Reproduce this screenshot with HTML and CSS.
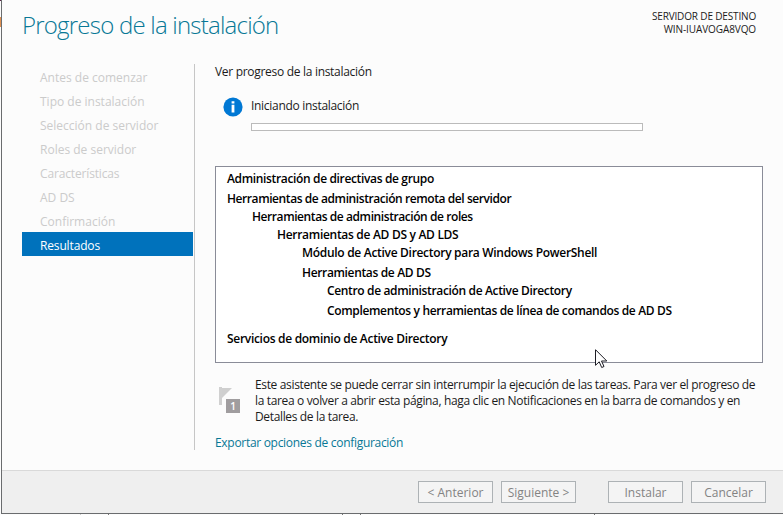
FILE: index.html
```html
<!DOCTYPE html>
<html lang="es">
<head>
<meta charset="utf-8">
<title>Progreso de la instalación</title>
<link rel="stylesheet" href="styles.css">
</head>
<body>
<div class="backdrop-left"><i class="mark-purple"></i><i class="mark-orange"></i></div>
<main class="wizard">
  <header class="header">
    <h1>Progreso de la instalación</h1>
    <div class="server"><div>SERVIDOR DE DESTINO</div><div class="server-name">WIN-IUAVOGA8VQO</div></div>
  </header>
  <div class="body">
    <nav class="steps">
      <span>Antes de comenzar</span>
      <span>Tipo de instalación</span>
      <span>Selección de servidor</span>
      <span>Roles de servidor</span>
      <span class="snug">Características</span>
      <span>AD DS</span>
      <span>Confirmación</span>
      <span class="active snug">Resultados</span>
    </nav>
    <section class="content">
      <div class="caption">Ver progreso de la instalación</div>
      <div class="status">
        <svg class="info" width="20" height="20" viewBox="0 0 20 20"><circle cx="10" cy="10" r="9.6" fill="#0078d4"/><path d="M8.600 4.300h2.800v2.200H8.600zM8.600 7.700h2.800v7.800H8.600z" fill="#fff"/></svg>
        <div class="status-main"><div class="status-text">Iniciando instalación</div><div class="bar"></div></div>
      </div>
      <ul class="features">
        <li class="tall">Administración de directivas de grupo</li>
        <li class="tight">Herramientas de administración remota del servidor</li>
        <li class="l1 tight">Herramientas de administración de roles</li>
        <li class="l2 loose">Herramientas de AD DS y AD LDS</li>
        <li class="l3 tall loose">Módulo de Active Directory para Windows PowerShell</li>
        <li class="l3">Herramientas de AD DS</li>
        <li class="l4 tall">Centro de administración de Active Directory</li>
        <li class="l4 last">Complementos y herramientas de línea de comandos de AD DS</li>
        <li class="loose">Servicios de dominio de Active Directory</li>
      </ul>
      <div class="note">
        <svg class="flag" width="24" height="28" viewBox="0 0 24 28"><path d="M0 0h3v18H0z" fill="#d0d0d0"/><path d="M3 1h10L3 11z" fill="#cfcfcf"/><path d="M7 12h14v14H7z" fill="#a09d9f"/><text x="14" y="23" text-anchor="middle">1</text></svg>
        <p>Este asistente se puede cerrar sin interrumpir la ejecución de las tareas. Para ver el progreso de<br>la tarea o volver a abrir esta página, haga clic en Notificaciones en la barra de comandos y en<br>Detalles de la tarea.</p>
      </div>
      <a class="export">Exportar opciones de configuración</a>
    </section>
  </div>
  <footer class="footer">
    <button>&lt; Anterior</button><button>Siguiente &gt;</button><button class="install">Instalar</button><button>Cancelar</button>
  </footer>
</main>
<div class="backdrop-bottom"><i></i><i></i><i></i><i></i><i></i></div>
<svg class="cursor" width="13" height="20" viewBox="0 0 13 20"><path d="M.5.7v15.600l3.700-3.500 2.500 5.700 2.300-1-2.500-5.500h5.300z" fill="#fff" stroke="#1c1c24"/></svg>
</body>
</html>
```
FILE: styles.css
```css
* { box-sizing: border-box; }
body {
  margin: 0;
  width: 783px;
  height: 515px;
  overflow: hidden;
  display: grid;
  grid-template: 514px 1px / 1px 782px;
  background: #fcfcfc;
  color: #1b1b1b;
  font: 12px/16px "Open Sans", "Noto Sans", sans-serif;
  white-space: nowrap;
}
.backdrop-left { display: flex; flex-direction: column; }
.mark-purple { height: 1px; background: #5b2348; }
.mark-orange { height: 10px; margin-top: 16px; background: #e09152; }
.wizard {
  display: flex;
  flex-direction: column;
  border-left: 1px solid #6a6c6e;
  border-bottom: 1px solid #6a6c6e;
}
.header {
  height: 64px;
  display: flex;
  justify-content: space-between;
  padding: 8px 27px 0 20px;
}
h1 {
  margin: 0;
  font-size: 24px;
  line-height: 34px;
  font-weight: 300;
  color: #087896;
  letter-spacing: -0.78px;
}
.server { text-align: right; font-size: 10px; line-height: 13px; padding-top: 2px; letter-spacing: -0.16px; }
.server-name { letter-spacing: -0.1px; }
.body { display: flex; height: 406px; }
.steps {
  width: 193px;
  height: 386px;
  padding: 0 1px 0 20px;
  border-right: 1px solid #c6c6c6;
  display: flex;
  flex-direction: column;
}
.steps span {
  height: 24px;
  line-height: 28px;
  padding-left: 18px;
  color: #cbcbcb;
}
.steps .snug { letter-spacing: -0.15px; }
.steps .active { background: #0072bc; color: #fff; }
.content { width: 568px; padding-left: 20px; letter-spacing: -0.3px; }
.caption { line-height: 16px; height: 16px; }
.status { display: flex; height: 86px; padding: 17px 0 0 8px; }
.status-text { height: 16px; line-height: 18px; }
.info { margin-right: 8px; }
.bar { width: 392px; height: 8px; margin-top: 10px; border: 1px solid #bbb; background: #fff; }
.features {
  list-style: none;
  margin: 0;
  height: 197px;
  padding: 3px 0 0 11px;
  border: 1px solid #8a8c98;
  background: #fff;
  color: #000;
  font-weight: 600;
  letter-spacing: -0.35px;
}
.features li { height: 18px; line-height: 18px; }
.features .tall { height: 20px; }
.features .tight { letter-spacing: -0.42px; }
.features .loose { letter-spacing: -0.3px; }
.l1 { padding-left: 25px; }
.l2 { padding-left: 50px; }
.l3 { padding-left: 75px; }
.l4 { padding-left: 100px; }
.features .last { height: 28px; }
.note { display: flex; height: 72px; padding: 14px 0 0 4px; }
.note p { margin: 0; letter-spacing: -0.35px; }
.flag { flex: none; margin: 10px 12px 0 0; }
.flag text { fill: #fff; font-size: 10px; font-weight: 600; letter-spacing: 0; }
.export { color: #087896; display: block; }
.footer {
  height: 43px;
  padding: 10px 0 0 416px;
  display: flex;
  gap: 8px;
  border-top: 1px solid #d9d9d9;
  background: #efefef;
}
button {
  width: 75px;
  height: 22px;
  padding: 1px 0 0;
  border: 1px solid #adb2b5;
  background: #f4f4f4;
  color: #838383;
  font: inherit;
}
.install { margin-left: 24px; }
.backdrop-bottom { grid-column: 1 / 3; grid-row: 2; display: grid; grid-template-columns: 81px 28px 234px 18px 234px 1fr; }
.backdrop-bottom i { border-right: 1px solid #777; }
.backdrop-bottom i:first-child { border-color: #ccc; }
.cursor { position: absolute; left: 595px; top: 349px; }
```
